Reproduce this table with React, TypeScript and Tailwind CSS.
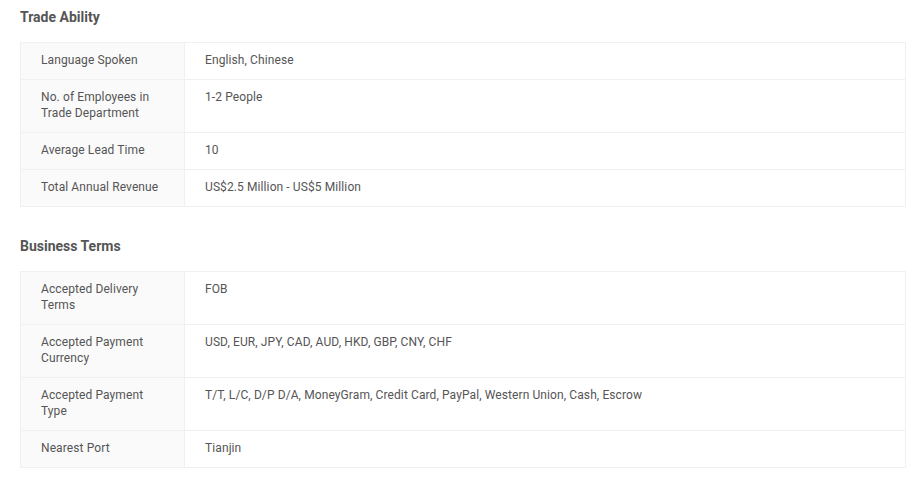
import React from "react";

const tradeAbility = [
  { label: "Language Spoken", value: "English, Chinese" },
  { label: "No. of Employees in Trade Department", value: "1-2 People" },
  { label: "Average Lead Time", value: "10" },
  { label: "Total Annual Revenue", value: "US$2.5 Million - US$5 Million" },
];

const businessTerms = [
  { label: "Accepted Delivery Terms", value: "FOB" },
  {
    label: "Accepted Payment Currency",
    value: "USD, EUR, JPY, CAD, AUD, HKD, GBP, CNY, CHF",
  },
  {
    label: "Accepted Payment Type",
    value:
      "T/T, L/C, D/P D/A, MoneyGram, Credit Card, PayPal, Western Union, Cash, Escrow",
  },
  { label: "Nearest Port", value: "Tianjin" },
];

function Section({
  title,
  rows,
}: {
  title: string;
  rows: { label: string; value: string }[];
}) {
  return (
    <div>
      <h2 className="text-[14px] leading-5 font-bold text-[#555] tracking-normal">
        {title}
      </h2>
      <div className="mt-[15px] w-[886px] border border-[#f0f0f0]">
        {rows.map((r, i) => (
          <div
            key={r.label}
            className={`flex ${i > 0 ? "border-t border-[#f0f0f0]" : ""}`}
          >
            <div className="w-[164px] shrink-0 bg-[#fafafa] border-r border-[#f0f0f0] pl-5 pr-6 pt-[9px] pb-[11px]">
              {r.label}
            </div>
            <div className="flex-1 px-5 pt-[9px] pb-[11px]">{r.value}</div>
          </div>
        ))}
      </div>
    </div>
  );
}

export default function App() {
  return (
    <div
      className="bg-white px-5 pt-[7px] text-[12px] leading-4 tracking-[0.1px] text-[#555]"
      style={{ fontFamily: "Roboto, 'Liberation Sans', sans-serif" }}
    >
      <Section title="Trade Ability" rows={tradeAbility} />
      <div className="mt-[29px]">
        <Section title="Business Terms" rows={businessTerms} />
      </div>
    </div>
  );
}
